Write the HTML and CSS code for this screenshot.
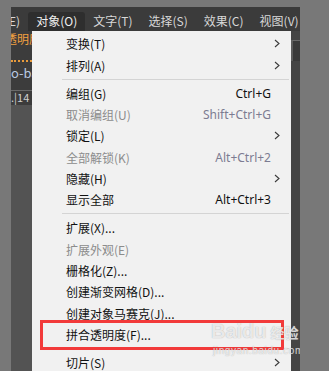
FILE: index.html
```html
<!DOCTYPE html>
<html lang="zh-CN">
<head>
  <meta charset="UTF-8" />
  <title>对象菜单</title>
  <link rel="stylesheet" href="styles.css">
</head>
<body>

  <div class="app">
    <div class="menubar">
      <span class="menu-title first">编辑(E)</span>
      <span class="menu-title active">对象(O)</span>
      <span class="menu-title">文字(T)</span>
      <span class="menu-title">选择(S)</span>
      <span class="menu-title">效果(C)</span>
      <span class="menu-title">视图(V)</span>
    </div>

    <div class="workspace">
      <div class="side-panel">
        <div class="panel-tab">透明度</div>
        <div class="panel-dots"></div>
        <div class="panel-name">o-ba</div>
        <div class="panel-row">.|14</div>
      </div>

      <div class="dropdown">
        <div class="item">变换(T)<span class="arrow"><svg width="6" height="9" viewBox="0 0 6 9"><polyline points="1,1 5,4.5 1,8" fill="none" stroke="#3a3a3a" stroke-width="1.1"/></svg></span></div>
        <div class="item">排列(A)<span class="arrow"><svg width="6" height="9" viewBox="0 0 6 9"><polyline points="1,1 5,4.5 1,8" fill="none" stroke="#3a3a3a" stroke-width="1.1"/></svg></span></div>
        <div class="sep"></div>
        <div class="item">编组(G)<span class="key">Ctrl+G</span></div>
        <div class="item disabled">取消编组(U)<span class="key">Shift+Ctrl+G</span></div>
        <div class="item">锁定(L)<span class="arrow"><svg width="6" height="9" viewBox="0 0 6 9"><polyline points="1,1 5,4.5 1,8" fill="none" stroke="#3a3a3a" stroke-width="1.1"/></svg></span></div>
        <div class="item disabled">全部解锁(K)<span class="key">Alt+Ctrl+2</span></div>
        <div class="item">隐藏(H)<span class="arrow"><svg width="6" height="9" viewBox="0 0 6 9"><polyline points="1,1 5,4.5 1,8" fill="none" stroke="#3a3a3a" stroke-width="1.1"/></svg></span></div>
        <div class="item">显示全部<span class="key">Alt+Ctrl+3</span></div>
        <div class="sep"></div>
        <div class="item">扩展(X)...</div>
        <div class="item disabled">扩展外观(E)</div>
        <div class="item">栅格化(Z)...</div>
        <div class="item">创建渐变网格(D)...</div>
        <div class="item">创建对象马赛克(J)...</div>
        <div class="item marked">拼合透明度(F)...<span class="mark-box"></span></div>
        <div class="sep"></div>
        <div class="item">切片(S)<span class="arrow"><svg width="6" height="9" viewBox="0 0 6 9"><polyline points="1,1 5,4.5 1,8" fill="none" stroke="#3a3a3a" stroke-width="1.1"/></svg></span></div>
      </div>

      <div class="side-strip">
        <div class="strip-box"></div>
      </div>
    </div>

    <div class="watermark">
      <div class="wm-logo">Baidu<span class="wm-cn">经验</span></div>
      <div class="wm-url">jingyan.baidu.com</div>
    </div>
  </div>

</body>
</html>
```

FILE: styles.css
```css
body {
  margin: 0;
  background: #787878;
  font-family: "Noto Sans CJK SC", "Liberation Sans", sans-serif;
  font-size: 12px;
  height: 371px;
  overflow: hidden;
}

.app {
  position: relative;
  margin: 7px 0 0 11px;
  width: 289px;
  height: 364px;
  background: #3b3b3b;
  display: flex;
  flex-direction: column;
  overflow: hidden;
}

/* top menu bar */
.menubar {
  height: 24px;
  display: flex;
  align-items: flex-end;
  white-space: nowrap;
  color: #d8d8d8;
}

.menu-title {
  height: 19px;
  line-height: 17px;
  padding: 0 8px;
  flex-shrink: 0;
}

.menu-title.first {
  margin-left: -38px;
}

.menu-title.active {
  background: #2e2e2e;
  border-radius: 3px 3px 0 0;
  color: #eeeeee;
}

.workspace {
  flex: 1;
  display: flex;
  min-height: 0;
}

/* left panel, mostly hidden behind the menu */
.side-panel {
  width: 21px;
  background: #535353;
  overflow: hidden;
  white-space: nowrap;
}

.panel-tab {
  height: 17px;
  line-height: 15px;
  background: #3c3c3c;
  color: #f0a040;
  margin-left: -6px;
}

.panel-dots {
  height: 12px;
  background: #3c3c3c;
  border-bottom: 2px dotted #e89a3a;
}

.panel-name {
  height: 28px;
  line-height: 22px;
  background: #3c3c3c;
  color: #b8c8e0;
  font-size: 13px;
  border-bottom: 1px solid #6a6a6a;
}

.panel-row {
  height: 14px;
  line-height: 12px;
  background: #3c3c3c;
  color: #d0d0d0;
  font-size: 11px;
}

/* the open dropdown */
.dropdown {
  position: relative;
  width: 259px;
  background: #f1f1f1;
  padding-top: 2px;
  color: #111111;
  overflow: hidden;
}

.item {
  position: relative;
  height: 21.35px;
  line-height: 21px;
  padding-left: 34px;
  display: flex;
  align-items: center;
  white-space: nowrap;
}

.item.disabled {
  color: #8c8c8c;
}

.key {
  margin-left: auto;
  margin-right: 20px;
  font-family: "Noto Sans", "Liberation Sans", sans-serif;
  font-size: 12px;
}

.item.disabled .key {
  color: #7c7c92;
}

.arrow {
  margin-left: auto;
  margin-right: 11px;
  height: 9px;
  display: flex;
}

.sep {
  height: 6.7px;
  display: flex;
  align-items: center;
  padding-left: 30px;
  padding-right: 2px;
}

.sep::after {
  content: "";
  flex: 1;
  height: 1px;
  background: #d4d4d4;
}

.mark-box {
  position: absolute;
  left: 8px;
  top: -4px;
  width: 238px;
  height: 24px;
  border: 3px solid #f23a3a;
}

/* faint site watermark over the corner */
.watermark {
  position: absolute;
  left: 200px;
  top: 311px;
  color: rgba(255, 255, 255, 0.75);
  text-shadow: 0 0 1px rgba(110, 110, 110, 0.6);
  pointer-events: none;
  white-space: nowrap;
}

.wm-logo {
  font-family: "Liberation Sans", sans-serif;
  font-size: 20px;
  font-weight: bold;
  line-height: 26px;
}

.wm-cn {
  font-family: "Noto Sans CJK SC", sans-serif;
  font-size: 14px;
  margin-left: 4px;
}

.wm-url {
  font-family: "Liberation Sans", sans-serif;
  font-size: 10px;
  letter-spacing: 0.6px;
  margin-left: 2px;
}

/* dark strip at the right edge */
.side-strip {
  width: 9px;
  background: #454545;
}

.strip-box {
  margin-top: 9px;
  height: 20px;
  border-top: 1px solid #6a6a6a;
  border-left: 2px solid #5c5c5c;
  background: #3a3a3a;
}
```
